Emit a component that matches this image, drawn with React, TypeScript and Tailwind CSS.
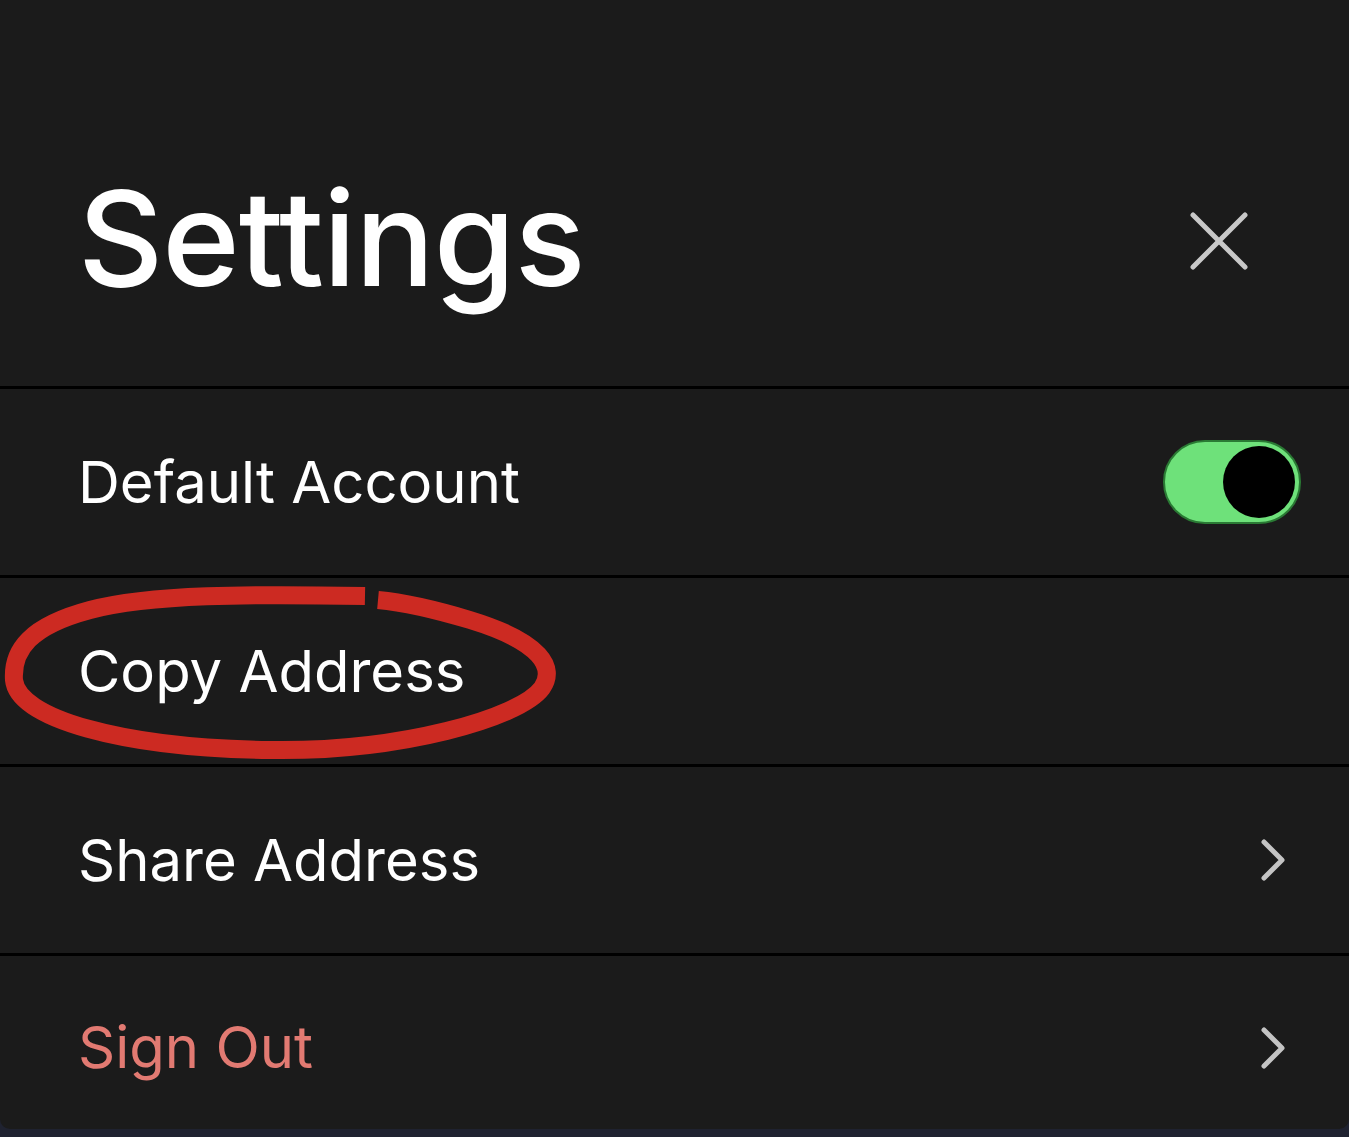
import React from 'react';

export default function App() {
  const font = { fontFamily: '"Inter", "Liberation Sans", sans-serif' };

  const Chevron = () => (
    <svg width="30" height="44" viewBox="0 0 30 44" fill="none">
      <path d="M5 4 L23 22 L5 40" stroke="#c4c4c4" strokeWidth="5" strokeLinecap="round" strokeLinejoin="round" />
    </svg>
  );

  return (
    <div className="w-[1349px] h-[1137px] bg-[#1f2230] overflow-hidden" style={font}>
      <div className="h-[1129px] bg-[#1b1b1b] rounded-b-[10px] flex flex-col">
        {/* Header */}
        <div className="h-[386px] flex items-start justify-between pl-[78px] pr-[100px] pt-[172px]">
          <h1 className="text-[132px] font-medium text-white tracking-[-1px] leading-none">Settings</h1>
          <svg width="60" height="60" viewBox="0 0 60 60" fill="none" className="mt-[39px]">
            <path d="M4 4 L56 56 M56 4 L4 56" stroke="#c8c8c8" strokeWidth="5" strokeLinecap="round" />
          </svg>
        </div>
        <div className="h-[3px] bg-black" />

        {/* Default Account */}
        <div className="h-[186px] flex items-center justify-between pl-[78px] pr-[48px]">
          <span className="text-[58px] text-white">Default Account</span>
          <div className="w-[138px] h-[84px] rounded-full bg-[#6ee17a] border-[2px] border-[#2a7a34] flex items-center justify-end pr-[4px]">
            <div className="w-[72px] h-[72px] rounded-full bg-black" />
          </div>
        </div>
        <div className="h-[3px] bg-black" />

        {/* Copy Address */}
        <div className="relative h-[186px] flex items-center pl-[78px]">
          <span className="text-[58px] text-white">Copy Address</span>
          <svg className="absolute left-0 top-0" width="600" height="200" viewBox="0 0 600 200" fill="none">
            <path
              d="M365 18 C250 16 150 16 90 32 C30 48 12 72 14 102 C18 140 120 170 270 172 C400 174 520 140 542 110 C556 90 542 64 470 42 C430 30 400 24 378 22"
              stroke="#cc2a22"
              strokeWidth="18"
              strokeLinecap="butt"
            />
          </svg>
        </div>
        <div className="h-[3px] bg-black" />

        {/* Share Address */}
        <div className="h-[186px] flex items-center justify-between pl-[78px] pr-[60px]">
          <span className="text-[58px] text-white">Share Address</span>
          <Chevron />
        </div>
        <div className="h-[3px] bg-black" />

        {/* Sign Out */}
        <div className="flex-1 flex items-center justify-between pl-[78px] pr-[60px] pt-[10px]">
          <span className="text-[58px] text-[#e27a72]">Sign Out</span>
          <Chevron />
        </div>
      </div>
    </div>
  );
}
